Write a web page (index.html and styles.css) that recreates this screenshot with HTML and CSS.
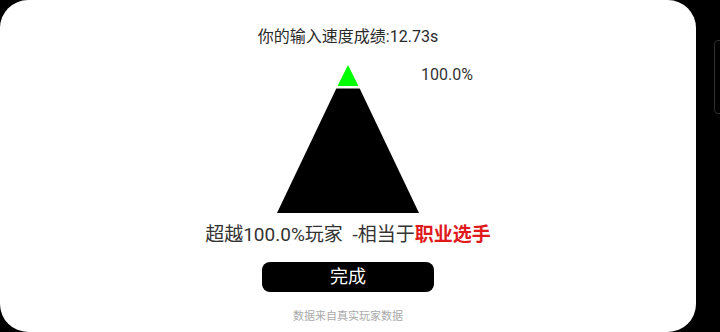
FILE: index.html
```html
<!DOCTYPE html>
<html lang="zh-CN">
<head>
    <meta charset="UTF-8">
    <meta name="viewport" content="width=device-width, initial-scale=1.0">
    <title>成绩</title>
    <link rel="stylesheet" href="styles.css">
</head>
<body>
    <div class="result_card">
        <div class="result_title">你的输入速度成绩:12.73s</div>

        <div class="pyramid">
            <svg width="142" height="148" viewBox="0 0 142 148">
                <polygon points="71,0 60.5,21 81.5,21" fill="#00ff00"/>
                <polygon points="59.3,23.5 82.7,23.5 142,148 0,148" fill="#000"/>
            </svg>
            <span class="pyramid_percent">100.0%</span>
        </div>

        <div class="rank_text">超越100.0%玩家 -相当于<b class="rank_level">职业选手</b></div>

        <div class="done_btn">完成</div>

        <div class="data_note">数据来自真实玩家数据</div>
    </div>

    <div class="side_handle"></div>
</body>
</html>
```

FILE: styles.css
```css
body{
    margin: 0;
    background-color: #000;
    font-family: Roboto, "Noto Sans CJK SC", sans-serif;
    overflow: hidden;
}
.result_card{
    display: flex;
    flex-direction: column;
    align-items: center;
    width: 696px;
    height: 332px;
    box-sizing: border-box;
    padding-top: 26px;
    background-color: #fff;
    border-radius: 28px;
}
.result_title{
    font-size: 16px;
    line-height: 21px;
    color: #2a2a2a;
}
.pyramid{
    position: relative;
    width: 142px;
    height: 148px;
    margin-top: 18px;
}
.pyramid svg{
    display: block;
}
.pyramid_percent{
    position: absolute;
    left: 144px;
    top: 0;
    font-size: 16px;
    line-height: 20px;
    color: #333;
    white-space: nowrap;
}
.rank_text{
    margin-top: 10px;
    font-size: 19px;
    line-height: 24px;
    color: #333;
    white-space: pre;
    word-spacing: 5px;
}
.rank_level{
    color: #e0191c;
    font-weight: bold;
}
.done_btn{
    width: 172px;
    height: 30px;
    margin-top: 15px;
    border-radius: 8px;
    background-color: #000;
    color: #fff;
    font-size: 18px;
    line-height: 30px;
    text-align: center;
}
.data_note{
    margin-top: 18px;
    font-size: 11px;
    line-height: 14px;
    color: #aaa;
}
.side_handle{
    position: absolute;
    left: 714px;
    top: 40px;
    width: 12px;
    height: 72px;
    border: 1px solid #2e2e2e;
    border-radius: 4px;
}
```
